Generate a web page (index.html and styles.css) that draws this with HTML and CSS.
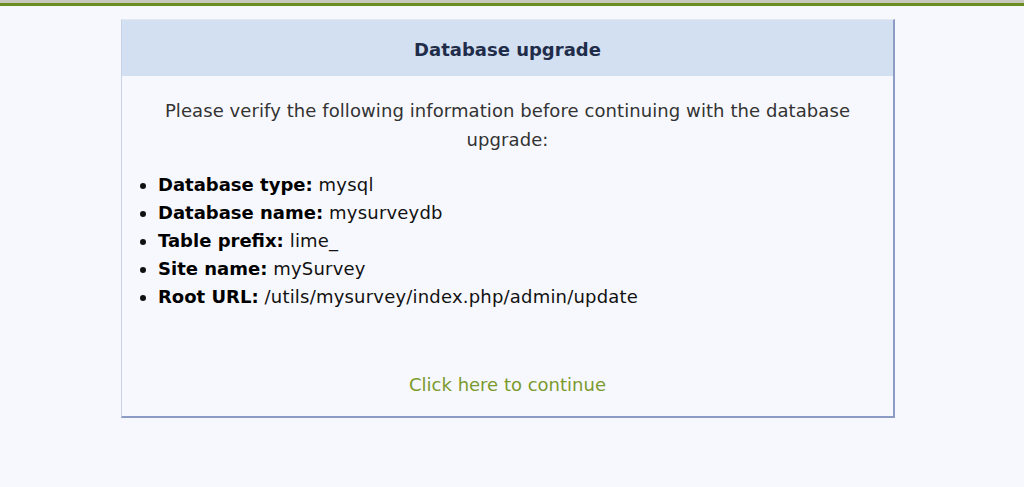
FILE: index.html
```html
<!DOCTYPE html>
<html>
<head>
<meta charset="utf-8">
<title>Database upgrade</title>
<link rel="stylesheet" href="styles.css">
</head>
<body>
<div class="topbar"></div>
<div class="panel">
  <div class="panel-header">Database upgrade</div>
  <div class="panel-body">
    <p class="intro">Please verify the following information before continuing with the database upgrade:</p>
    <ul class="info">
      <li><b>Database type:</b> mysql</li>
      <li><b>Database name:</b> mysurveydb</li>
      <li><b>Table prefix:</b> lime_</li>
      <li><b>Site name:</b> mySurvey</li>
      <li><b>Root URL:</b> /utils/mysurvey/index.php/admin/update</li>
    </ul>
    <p class="continue"><a href="#">Click here to continue</a></p>
  </div>
</div>
</body>
</html>
```
FILE: styles.css
```css
html, body {
  margin: 0;
  padding: 0;
  background: #f7f8fd;
  font-family: "DejaVu Sans", Verdana, sans-serif;
  font-size: 18px;
  color: #333;
}
.topbar {
  height: 3px;
  background: #c8c8bc;
  border-bottom: 3px solid #6b8e23;
}
.panel {
  margin: 13px 0 0 121px;
  width: 771px;
  border-top: 1px solid #e3e8f3;
  border-left: 1px solid #c9d4e8;
  border-right: 2px solid #8c9cc4;
  border-bottom: 2px solid #8c9cc4;
}
.panel-header {
  height: 56px;
  line-height: 59px;
  background: #d3e0f1;
  text-align: center;
  font-weight: bold;
  color: #1f2d4a;
}
.panel-body {
  padding: 0 16px 17px;
}
.intro {
  margin: 20px 0 0;
  line-height: 29px;
  text-align: center;
  letter-spacing: 0.08px;
}
.info {
  margin: 17px 0 0;
  padding-left: 20px;
  line-height: 28px;
  color: #111;
  letter-spacing: 0.2px;
}
.info b {
  color: #000;
  letter-spacing: 0;
}
.continue {
  margin: 60px 0 0;
  line-height: 28px;
  text-align: center;
}
.continue a {
  color: #7b9a2e;
  text-decoration: none;
}
```
